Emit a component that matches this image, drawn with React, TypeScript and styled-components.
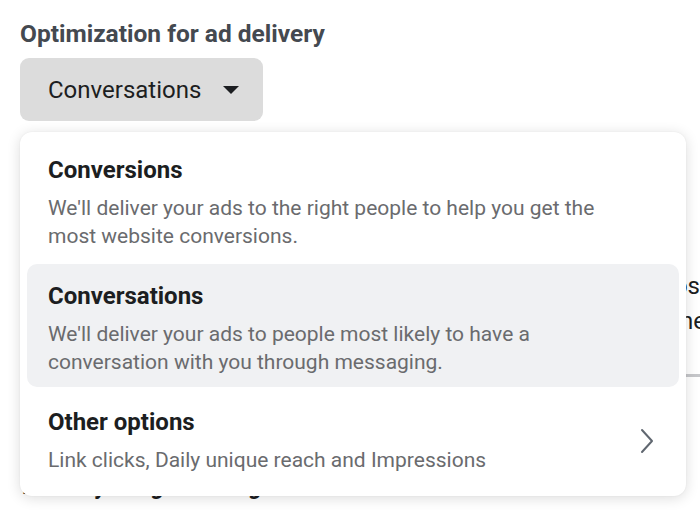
import React from "react";
import styled, { createGlobalStyle } from "styled-components";

const Global = createGlobalStyle`
  html, body { margin: 0; padding: 0; background: #ffffff; }
  body { font-family: Roboto, "Liberation Sans", Arial, sans-serif; overflow: hidden; }
`;

const Page = styled.div`
  position: relative;
  width: 700px;
  height: 514px;
  overflow: hidden;
  background: #ffffff;
`;

const Field = styled.section`
  display: flex;
  flex-direction: column;
  align-items: flex-start;
  padding: 20px 0 0 20px;
`;

const Heading = styled.h2`
  margin: 0;
  font-family: Roboto, "Liberation Sans", sans-serif;
  font-weight: 700;
  font-size: 24.5px;
  line-height: 28px;
  color: #444950;
`;

const SelectButton = styled.button`
  margin-top: 10px;
  display: flex;
  align-items: center;
  gap: 22px;
  height: 63px;
  width: 243px;
  padding: 0 20px 0 28px;
  border: none;
  border-radius: 9px;
  background: #dcdcdc;
  font-family: Roboto, "Liberation Sans", sans-serif;
  font-size: 24px;
  color: #1c1e21;
`;

const Caret = styled.span`
  width: 0;
  height: 0;
  border-left: 8px solid transparent;
  border-right: 8px solid transparent;
  border-top: 8px solid #1c1e21;
  margin-top: 1px;
`;

const Behind = styled.div`
  display: flex;
  justify-content: flex-end;
  padding-top: 148px;
`;

const SideText = styled.div`
  display: flex;
  flex-direction: column;
  align-items: stretch;
  width: 17px;
  overflow: hidden;
  font-size: 24px;
  line-height: 35px;
  color: #1c1e21;
`;

const SideLine = styled.div<{ $shift: number }>`
  display: flex;
  justify-content: flex-end;
  white-space: nowrap;
  margin-right: ${(p) => -p.$shift}px;
`;

const SideRule = styled.div`
  margin-top: 35px;
  height: 3px;
  background: #c6c7ca;
`;

const LowerHeading = styled.h3`
  margin: 98px 0 0 22px;
  font-weight: 700;
  font-size: 23px;
  line-height: 24px;
  color: #1c1e21;
`;

const Menu = styled.div`
  position: absolute;
  left: 20px;
  top: 132px;
  width: 666px;
  height: 364px;
  box-sizing: border-box;
  padding: 6px 7px;
  display: flex;
  flex-direction: column;
  gap: 3px;
  background: #ffffff;
  border-radius: 12px;
  box-shadow: 0 2px 14px rgba(0, 0, 0, 0.14), 0 0 2px rgba(0, 0, 0, 0.06);
`;

const Option = styled.div<{ $active?: boolean }>`
  display: flex;
  align-items: center;
  padding: 18px 21px 11px 21px;
  border-radius: 10px;
  background: ${(p) => (p.$active ? "#f0f1f3" : "transparent")};
`;

const OptionText = styled.div`
  flex: 1;
  display: flex;
  flex-direction: column;
  gap: 10px;
`;

const OptionTitle = styled.div`
  font-weight: 700;
  font-size: 24px;
  line-height: 28px;
  color: #1c1e21;
`;

const OptionDesc = styled.div`
  font-size: 21px;
  line-height: 28px;
  color: #6a6b6e;
  max-width: 565px;
`;

const Chevron = styled.svg`
  width: 14px;
  height: 26px;
  margin-right: 4px;
`;

export default function App() {
  return (
    <Page>
      <Global />
      <Field>
        <Heading>Optimization for ad delivery</Heading>
        <SelectButton>
          Conversations
          <Caret />
        </SelectButton>
      </Field>
      <Behind>
        <SideText>
          <SideLine $shift={0}>for these purpos</SideLine>
          <SideLine $shift={6}>through a phone</SideLine>
          <SideRule />
        </SideText>
      </Behind>
      <LowerHeading>Delivery budget setting</LowerHeading>
      <Menu>
        <Option>
          <OptionText>
            <OptionTitle>Conversions</OptionTitle>
            <OptionDesc>
              We'll deliver your ads to the right people to help you get the
              most website conversions.
            </OptionDesc>
          </OptionText>
        </Option>
        <Option $active>
          <OptionText>
            <OptionTitle>Conversations</OptionTitle>
            <OptionDesc>
              We'll deliver your ads to people most likely to have a
              conversation with you through messaging.
            </OptionDesc>
          </OptionText>
        </Option>
        <Option>
          <OptionText>
            <OptionTitle>Other options</OptionTitle>
            <OptionDesc>Link clicks, Daily unique reach and Impressions</OptionDesc>
          </OptionText>
          <Chevron viewBox="0 0 14 26" fill="none">
            <path d="M2 2 L12 13 L2 24" stroke="#606770" strokeWidth="2" strokeLinecap="round" strokeLinejoin="round" />
          </Chevron>
        </Option>
      </Menu>
    </Page>
  );
}
